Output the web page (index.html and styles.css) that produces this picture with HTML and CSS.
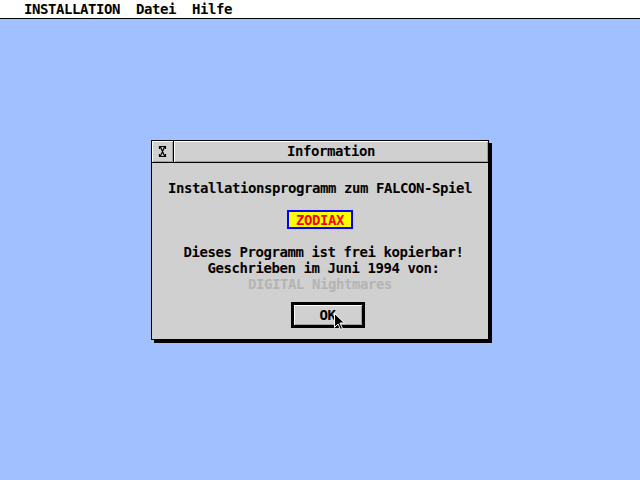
FILE: index.html
```html
<!DOCTYPE html>
<html lang="de">
<head>
  <meta charset="UTF-8">
  <title>INSTALLATION</title>
  <link rel="stylesheet" href="styles.css">
</head>
<body>

<header class="menubar">
  <span class="menu-title">INSTALLATION</span>
  <span class="menu-item">Datei</span>
  <span class="menu-item">Hilfe</span>
</header>

<main class="desktop">
  <section class="dialog">
    <div class="titlebar">
      <div class="closer">
        <svg width="9" height="13" viewBox="0 0 9 13">
          <path d="M1 1.5h7M1 11.5h7M2.5 2l4 9M6.5 2l-4 9M1.5 1v3M7.5 1v3M1.5 9v3M7.5 9v3" stroke="#000" stroke-width="1.2" fill="none"/>
        </svg>
      </div>
      <div class="title">Information</div>
    </div>
    <div class="content">
      <p class="line">Installationsprogramm zum FALCON-Spiel</p>
      <div class="badge">ZODIAX</div>
      <p class="line first shift">Dieses Programm ist frei kopierbar!</p>
      <p class="line shift">Geschrieben im Juni 1994 von:</p>
      <p class="line dim">DIGITAL Nightmares</p>
      <div class="actions">
        <button class="ok">OK</button>
        <svg class="pointer" width="11" height="17" viewBox="0 0 11 17">
          <path d="M0.5 0.5v14l3.5-3.5 2.5 5.5 2-1-2.5-5.5h4.5z" fill="#000" stroke="#fff" stroke-width="1"/>
        </svg>
      </div>
    </div>
  </section>
</main>

</body>
</html>
```

FILE: styles.css
```css
body {
  margin: 0;
  padding: 0;
  width: 640px;
  height: 480px;
  overflow: hidden;
  background-color: #a0c0ff;
  font-family: "DejaVu Sans Mono", "Liberation Mono", monospace;
  font-weight: bold;
  font-size: 14px;
  letter-spacing: -0.43px;
  color: #000;
}
.menubar {
  display: flex;
  gap: 16px;
  height: 18px;
  padding-left: 24px;
  background-color: #fff;
  border-bottom: 1px solid #000;
  line-height: 19px;
}
.desktop {
  padding-top: 121px;
}
.dialog {
  width: 336px;
  height: 198px;
  margin: 0 auto;
  background-color: #d0d0d0;
  border: 1px solid #000;
  box-shadow: 3px 3px 0 #000;
  display: flex;
  flex-direction: column;
}
.titlebar {
  display: flex;
  height: 21px;
  border-bottom: 1px solid #000;
}
.closer {
  width: 21px;
  border-right: 1px solid #000;
  display: flex;
  align-items: center;
  justify-content: center;
  box-shadow: inset 1px 1px 0 #fff, inset -1px -1px 0 #a0a0a0;
}
.title {
  flex: 1;
  text-align: center;
  line-height: 21px;
  box-shadow: inset 1px 1px 0 #fff, inset -1px -1px 0 #a0a0a0;
}
.content {
  display: flex;
  flex-direction: column;
  align-items: center;
  padding-top: 17px;
}
.line {
  margin: 0;
  line-height: 16px;
  height: 16px;
}
.line.first {
  margin-top: 15px;
}
.shift {
  margin-left: 7px;
}
.dim {
  color: #b4b4b4;
}
.badge {
  margin-top: 14px;
  width: 62px;
  height: 15px;
  border: 2px solid #0000ff;
  background-color: #ffff00;
  color: #ff0000;
  text-align: center;
  line-height: 16px;
}
.actions {
  position: relative;
  margin-top: 10px;
  margin-left: 15px;
}
.ok {
  width: 74px;
  height: 26px;
  padding: 0;
  background-color: #d0d0d0;
  border: 3px solid #000;
  box-shadow: inset 1px 1px 0 #fff, inset -1px -1px 0 #a0a0a0;
  font: inherit;
  letter-spacing: inherit;
  color: #000;
  line-height: 18px;
}
.pointer {
  position: absolute;
  left: 43px;
  top: 11px;
}
```
